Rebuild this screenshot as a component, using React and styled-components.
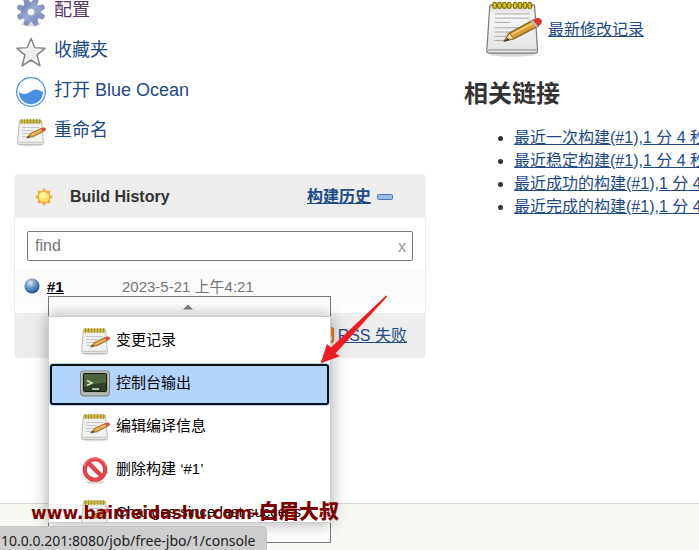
import React, { useState } from 'react';
import styled, { createGlobalStyle } from 'styled-components';

const GlobalStyle = createGlobalStyle`
  * {
    box-sizing: border-box;
  }

  body {
    margin: 0;
    background: #fff;
    color: #333;
    font: 16px/23px "Liberation Sans", "Noto Sans CJK SC", sans-serif;
  }

  a {
    color: #204a87;
  }
`;

const Page = styled.div`
  position: relative;
  display: flex;
  flex-direction: column;
  min-height: 100vh;
  overflow: hidden;
`;

const Columns = styled.div`
  flex: 1;
  display: flex;
  gap: 38px;
  padding-left: 14px;
`;

const SidePanel = styled.aside`
  flex: 0 1 412px;
  min-width: 0;
`;

const MainPanel = styled.main`
  flex: 1;
  min-width: 0;
  white-space: nowrap;
`;

/* the page is scrolled a little, so the first task is cut at the top */
const Tasks = styled.nav`
  display: flex;
  flex-direction: column;
  margin-top: -10px;
  margin-bottom: 24px;
`;

const Task = styled.a`
  display: flex;
  align-items: center;
  gap: 8px;
  height: 40px;
  padding-left: 2px;
  font-size: 18px;
  text-decoration: none;
  color: ${props => (props.$visited ? '#5c3566' : '#204a87')};

  svg {
    margin-top: 3px;
  }
`;

const Pane = styled.section`
  position: relative;
  border: 1px solid #ededed;
  border-radius: 6px;
`;

const PaneHeader = styled.header`
  display: flex;
  align-items: center;
  height: 43px;
  padding: 0 32px 0 19px;
  background: #ededed;

  h2 {
    flex: 1;
    margin: 0 0 0 16px;
    font-size: 16px;
  }

  a {
    margin-right: 6px;
    font-weight: bold;
  }
`;

const SearchBox = styled.div`
  display: flex;
  align-items: center;
  height: 30px;
  margin: 13px 12px 9px;
  padding-bottom: 2px;
  border: 1px solid #767676;
  border-radius: 2px;

  input {
    flex: 1;
    min-width: 0;
    padding: 0 7px;
    border: 0;
    outline: 0;
    background: none;
    font: inherit;
  }

  input::placeholder {
    color: #757575;
    opacity: 1;
  }

  button {
    padding: 2px 6px 0;
    border: 0;
    background: none;
    color: #999;
    font: inherit;
  }
`;

const BuildRow = styled.div`
  position: relative;
  display: flex;
  align-items: center;
  height: 35px;
  margin-bottom: 8px;
  padding: 0 0 3px 9px;
  background: #fbfbfb;
  font-size: 15px;

  > a {
    width: 75px;
    margin-left: 7px;
    color: #000;
    font-weight: bold;
  }

  time {
    color: #757575;
  }
`;

const PaneFooter = styled.footer`
  display: flex;
  align-items: center;
  justify-content: flex-end;
  gap: 4px;
  height: 44px;
  padding-right: 18px;
  background: #ededed;
`;

const Menu = styled.div`
  position: absolute;
  z-index: 2;
  top: 26px;
  left: 33px;
  width: 283px;
  border: 1px solid #777;
  background: #fff;
  font-size: 15px;
`;

const ScrollButton = styled.button`
  display: flex;
  align-items: center;
  justify-content: center;
  width: 100%;
  height: 19px;
  padding: 0 4px 0 0;
  border: 0;
  background: none;
`;

const MenuList = styled.ul`
  position: relative;
  height: 207px;
  margin: 0 -1px;
  padding: 3px 0 0;
  border: 1px solid #ccc;
  background: #fff;
  box-shadow: 0 0 16px rgba(0, 0, 0, 0.35);
  list-style: none;
  overflow: hidden;
`;

const MenuItem = styled.a`
  display: flex;
  align-items: center;
  gap: 6px;
  height: 43px;
  padding: 0 0 5px 31px;
  color: #000;
  text-decoration: none;
  white-space: nowrap;
  background: ${props => (props.$active ? '#b3d4ff' : '#fff')};
  outline: ${props => (props.$active ? '2px solid #111' : 'none')};
  outline-offset: -3px;
  border-radius: 4px;

  svg {
    margin-top: 3px;
  }
`;

const Arrow = styled.svg`
  position: absolute;
  z-index: 3;
  left: 304px;
  top: 120px;
`;

const Changes = styled.div`
  display: flex;
  align-items: center;
  gap: 5px;
  padding-left: 21px;
`;

const Heading = styled.h2`
  margin: 20px 0 16px;
  font-size: 24px;
  line-height: 32px;
`;

const Permalinks = styled.ul`
  margin: 0;
  padding-left: 50px;
`;

const PageFooter = styled.footer`
  height: 47px;
  border-top: 1px solid #d3d7cf;
  background: #f6faf2;
`;

const Watermark = styled.div`
  position: absolute;
  z-index: 4;
  left: 31px;
  bottom: 24px;
  color: #7c0000;
  font: bold 17px/26px "DejaVu Sans", "Noto Sans CJK SC", sans-serif;
  white-space: nowrap;

  span {
    font-family: "Noto Sans CJK SC", sans-serif;
    font-size: 20px;
    font-weight: 900;
  }
`;

const StatusBar = styled.div`
  position: fixed;
  z-index: 5;
  left: 0;
  bottom: 0;
  height: 24px;
  padding: 0 11px 0 1px;
  border: 1px solid #c4c4c4;
  border-width: 1px 1px 0 0;
  border-radius: 0 5px 0 0;
  background: #cecece;
  color: #222;
  font: 14px/27px "Noto Sans", sans-serif;
`;

function NotepadLargeIcon() {
  const rings = [8, 12, 16, 20, 25, 29, 33, 37];
  return (
    <svg width="58" height="58" viewBox="0 0 48 48" aria-hidden="true">
      <defs>
        <linearGradient id="paper" x1="0" y1="0" x2="0" y2="1">
          <stop offset="0" stopColor="#d0d0d0" />
          <stop offset="0.2" stopColor="#f6f6f6" />
          <stop offset="1" stopColor="#e2e2e2" />
        </linearGradient>
      </defs>
      <ellipse cx="23" cy="45" rx="19" ry="2" fill="#000" opacity="0.15" />
      <path d="M5 4h35q1 0 1.100 1l2.400 37q0 2-2 2H3.500q-2 0-2-2L3.900 5q.1-1 1.100-1z" fill="url(#paper)" stroke="#7d7d7d" />
      <path d="M2.500 40.500h40v1.500h-40z" fill="#b0b0b0" />
      <path d="M8 11.500h29M8 15h29M8 18.500h13M8 23h28M8 26.500h22M8 30h17M8 33.500h10" stroke="#a6a6a6" strokeWidth="0.800" />
      {rings.map(x => (
        <rect key={x} x={x - 1.5} y="2" width="3" height="5" rx="1.500" fill="#d8c534" stroke="#857500" />
      ))}
      <path d="M16 34l4-6.500 20-11 4 5-20 10.500z" fill="#db9b37" stroke="#825614" />
      <path d="M22 28.500l19-10" stroke="#f5ce78" strokeWidth="1.500" />
      <path d="M16 34l4-6.500 4 4.500z" fill="#f1dba8" stroke="#825614" strokeWidth="0.700" />
      <path d="M15.500 34.500l3.500-3 1 1.500z" fill="#222" />
      <path d="M38 17.500l4 5 2-1-4-5z" fill="#bbb" />
      <path d="M40 16.500l3-1.300q2.500-.5 3.500 1.300t-.5 3.500l-2 1.300z" fill="#e33232" stroke="#a33" strokeWidth="0.500" />
    </svg>
  );
}

function NotepadIcon() {
  return (
    <svg width="30" height="30" viewBox="0 0 30 30" aria-hidden="true">
      <ellipse cx="15" cy="28" rx="12" ry="1.500" fill="#000" opacity="0.13" />
      <path d="M3.500 3.500h22l2 23q0 1-1 1h-24q-1 0-1-1z" fill="#f1f1ef" stroke="#bdbdb9" />
      <path d="M2.500 25.500h24" stroke="#c9c9c5" strokeWidth="1.500" />
      <path d="M6 10.500h17M6 13.500h11M6 16.500h14M6 19.500h7" stroke="#c6c8cc" />
      <path d="M4 2.500h21v4H4z" fill="#c6b54a" />
      <path d="M5.500 2v5M8.500 2v5M11.500 2v5M14.500 2v5M17.500 2v5M20.500 2v5M23.500 2v5" stroke="#ab9a35" />
      <path d="M12 20l2.500-3.700L25 11.500l2 3.200L16.500 20z" fill="#d99b3c" stroke="#94682a" strokeWidth="0.800" />
      <path d="M15.500 18l10.500-5" stroke="#f0c56e" />
      <path d="M10 21.500l2.500-3.200 2 2.200z" fill="#6b5026" />
      <path d="M25 11.500l2-1q2-.5 2.700 1t-.7 2.400l-2 .8z" fill="#dd4a40" />
    </svg>
  );
}

function GearIcon() {
  const teeth = [0, 45, 90, 135, 180, 225, 270, 315];
  return (
    <svg width="30" height="30" viewBox="0 0 30 30" aria-hidden="true">
      <defs>
        <linearGradient id="gear" x1="0" y1="0" x2="1" y2="1">
          <stop offset="0" stopColor="#6679ac" />
          <stop offset="0.500" stopColor="#9aa9d2" />
          <stop offset="1" stopColor="#7381b8" />
        </linearGradient>
      </defs>
      <ellipse cx="15" cy="27" rx="10" ry="2.500" fill="#000" opacity="0.15" />
      <g fill="#8594c4">
        {teeth.map(a => (
          <path key={a} d="M11.800 6l.8-5.200q2.400-.8 4.800 0l.8 5.200z" transform={`rotate(${a + 22} 15 15)`} />
        ))}
      </g>
      <circle cx="15" cy="15" r="10" fill="url(#gear)" />
      <circle cx="15" cy="15" r="3.800" fill="#fff" stroke="#8591bb" strokeWidth="0.700" />
    </svg>
  );
}

function StarIcon() {
  return (
    <svg width="30" height="30" viewBox="0 0 30 30" aria-hidden="true">
      <path d="M15 1.500l3.700 9.300 10.300.5-8 6.600 2.900 10.900L15 23l-8.900 5.800L9 17.900l-8-6.600 10.300-.5z" fill="#ededed" stroke="#888a85" strokeWidth="1.600" strokeLinejoin="round" />
      <path d="M15 5l2.500 7 7.500.500-6 5 2.200 7.500-6.200-4-6.200 4L11 17.500l-6-5 7.500-.500z" fill="none" stroke="#fafafa" />
    </svg>
  );
}

function OceanIcon() {
  return (
    <svg width="30" height="30" viewBox="0 0 30 30" aria-hidden="true">
      <circle cx="15" cy="15" r="14.300" fill="#fff" stroke="#4a90e2" strokeWidth="1.300" />
      <path d="M3 15.300c2 .8 3 1.700 5.500 1.700 5 0 6.500-4.500 11.500-4.500 3 0 4 1.500 7 2.500a12 12 0 0 1-24 .3z" fill="#4a90e2" />
    </svg>
  );
}

function ConsoleIcon() {
  return (
    <svg width="30" height="30" viewBox="0 0 30 30" aria-hidden="true">
      <rect x="0.500" y="2" width="29" height="25" rx="3" fill="#a9aca6" stroke="#7c7e79" />
      <rect x="1.500" y="3" width="27" height="22" rx="2" fill="none" stroke="#c2c4bf" />
      <rect x="3.500" y="4.500" width="23" height="18" rx="1" fill="#2f3f24" stroke="#151b12" />
      <path d="M4 5h22v9Q14 14 4 18z" fill="#4c653a" />
      <path d="M7 11.500l5 2.500-5 2.500M12 20h7" fill="none" stroke="#d5e3cc" strokeWidth="1.500" />
      <circle cx="20.500" cy="24.500" r="1" fill="#83e33b" />
    </svg>
  );
}

function StopIcon() {
  return (
    <svg width="30" height="30" viewBox="0 0 30 30" aria-hidden="true">
      <ellipse cx="15" cy="27" rx="9" ry="2" fill="#000" opacity="0.15" />
      <circle cx="15" cy="14.500" r="10.300" fill="#f8f8f8" stroke="#cf3038" strokeWidth="4" />
      <path d="M8 7.500l14 14" stroke="#cf3038" strokeWidth="4" />
      <circle cx="15" cy="14.500" r="10.300" fill="none" stroke="#e5484c" strokeWidth="2.800" />
      <path d="M8 7.500l14 14" stroke="#e5484c" strokeWidth="2.800" />
      <path d="M4 11a11.500 11.500 0 0 1 22 0" fill="none" stroke="#f2989a" />
    </svg>
  );
}

function SunIcon() {
  const rays = [0, 45, 90, 135, 180, 225, 270, 315];
  return (
    <svg width="20" height="20" viewBox="0 0 20 20" aria-hidden="true">
      {rays.map(a => (
        <path key={a} d="M7.500 4.500L10 .8l2.500 3.700z" fill="#f9ab3d" transform={`rotate(${a} 10 10)`} />
      ))}
      <circle cx="10" cy="10" r="5.800" fill="#fce067" stroke="#f5a43a" />
      <circle cx="8.500" cy="8.500" r="3" fill="#fff7a8" />
    </svg>
  );
}

function BallIcon() {
  return (
    <svg width="16" height="16" viewBox="0 0 16 16" aria-hidden="true">
      <defs>
        <radialGradient id="ball" cx="0.400" cy="0.300" r="0.700">
          <stop offset="0" stopColor="#dfe9e4" />
          <stop offset="0.450" stopColor="#6f9bca" />
          <stop offset="1" stopColor="#20508f" />
        </radialGradient>
      </defs>
      <circle cx="8" cy="8" r="7.600" fill="url(#ball)" />
    </svg>
  );
}

const tasks = [
  { text: '配置', icon: <GearIcon />, visited: true },
  { text: '收藏夹', icon: <StarIcon /> },
  { text: '打开 Blue Ocean', icon: <OceanIcon /> },
  { text: '重命名', icon: <NotepadIcon /> },
];

const menuItems = [
  { text: '变更记录', icon: <NotepadIcon /> },
  { text: '控制台输出', icon: <ConsoleIcon />, active: true },
  { text: '编辑编译信息', icon: <NotepadIcon /> },
  { text: '删除构建 ‘#1’', icon: <StopIcon /> },
  { text: 'Changes since last success', icon: <NotepadIcon /> },
];

const permalinks = [
  '最近一次构建(#1),1 分 4 秒之前',
  '最近稳定构建(#1),1 分 4 秒之前',
  '最近成功的构建(#1),1 分 4 秒之前',
  '最近完成的构建(#1),1 分 4 秒之前',
];

function BuildMenu() {
  return (
    <Menu>
      <ScrollButton aria-label="向上">
        <svg width="10" height="6" viewBox="0 0 10 6"><path d="M0 5.500L5 .5l5 5z" fill="#808080" /></svg>
      </ScrollButton>
      <MenuList>
        {menuItems.map(item => (
          <li key={item.text}>
            <MenuItem href="#" $active={item.active}>
              {item.icon}
              {item.text}
            </MenuItem>
          </li>
        ))}
      </MenuList>
      <ScrollButton aria-label="向下" />
    </Menu>
  );
}

function BuildHistory() {
  const [filter, setFilter] = useState('');

  return (
    <Pane>
      <PaneHeader>
        <SunIcon />
        <h2>Build History</h2>
        <a href="#">构建历史</a>
        <svg width="16" height="6" viewBox="0 0 16 6" aria-hidden="true">
          <rect x="0.500" y="0.500" width="15" height="5" rx="1" fill="#9dbbe0" stroke="#4478b5" />
        </svg>
      </PaneHeader>
      <SearchBox>
        <input
          type="text"
          placeholder="find"
          aria-label="find"
          value={filter}
          onChange={e => setFilter(e.target.value)}
        />
        <button onClick={() => setFilter('')}>x</button>
      </SearchBox>
      <BuildRow>
        <BallIcon />
        <a href="#">#1</a>
        <time>2023-5-21 上午4:21</time>
        <BuildMenu />
      </BuildRow>
      <PaneFooter>
        <svg width="16" height="16" viewBox="0 0 16 16" aria-hidden="true">
          <rect x="0.500" y="0.500" width="15" height="15" rx="2" fill="#f0883a" stroke="#d9772f" />
          <path d="M3 3a10 10 0 0 1 10 10M3 7a6 6 0 0 1 6 6" fill="none" stroke="#fff" strokeWidth="2" />
          <circle cx="4.500" cy="11.500" r="1.500" fill="#fff" />
        </svg>
        <a href="#">RSS 失败</a>
      </PaneFooter>
      <Arrow width="70" height="70" viewBox="0 0 70 70" aria-hidden="true">
        <path d="M1.500 68.500L8 49l4 3.500L67 .5q1.500 0 .8 1.500L16.500 58.500l4.500 2.500z" fill="#ee1c24" />
      </Arrow>
    </Pane>
  );
}

export default function App() {
  return (
    <Page>
      <GlobalStyle />
      <Columns>
        <SidePanel>
          <Tasks>
            {tasks.map(task => (
              <Task key={task.text} href="#" $visited={task.visited}>
                {task.icon}
                {task.text}
              </Task>
            ))}
          </Tasks>
          <BuildHistory />
        </SidePanel>
        <MainPanel>
          <Changes>
            <NotepadLargeIcon />
            <a href="#">最新修改记录</a>
          </Changes>
          <Heading>相关链接</Heading>
          <Permalinks>
            {permalinks.map(text => (
              <li key={text}><a href="#">{text}</a></li>
            ))}
          </Permalinks>
        </MainPanel>
      </Columns>
      <PageFooter />
      <Watermark>www.baimeidashu.com-<span>白眉大叔</span></Watermark>
      <StatusBar>10.0.0.201:8080/job/free-jbo/1/console</StatusBar>
    </Page>
  );
}
